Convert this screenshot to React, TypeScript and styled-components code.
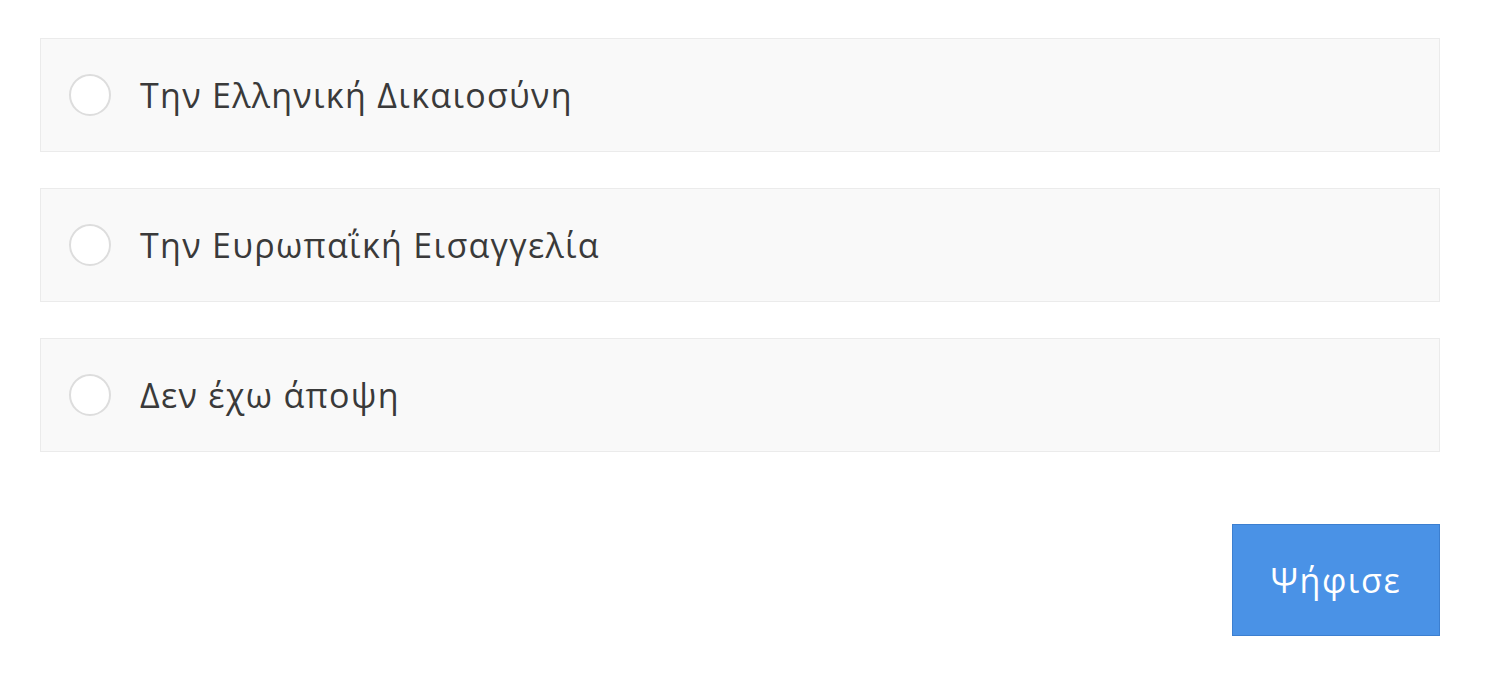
import React from "react";
import styled, { createGlobalStyle } from "styled-components";

const GlobalStyle = createGlobalStyle`
  body {
    margin: 0;
    background: #ffffff;
    font-family: "Open Sans", "Noto Sans", sans-serif;
  }
`;

const Poll = styled.form`
  display: flex;
  flex-direction: column;
  gap: 36px;
  width: 1400px;
  padding: 38px 0 0 40px;
`;

const Option = styled.label`
  display: flex;
  align-items: center;
  gap: 29px;
  padding: 0 28px;
  height: 114px;
  background: #f9f9f9;
  border: 1px solid #ebebeb;
  box-sizing: border-box;
  cursor: pointer;
`;

const Radio = styled.span`
  width: 42px;
  height: 42px;
  border-radius: 50%;
  border: 2px solid #dddddd;
  background: #ffffff;
  box-sizing: border-box;
  flex-shrink: 0;
`;

const OptionText = styled.span`
  font-size: 34px;
  color: #3a3a3a;
  letter-spacing: 1.3px;
`;

const Actions = styled.div`
  display: flex;
  justify-content: flex-end;
  margin-top: 36px;
`;

const VoteButton = styled.button`
  width: 208px;
  height: 112px;
  background: #4a92e6;
  border: 1px solid #3c7fd0;
  color: #ffffff;
  font-family: "Open Sans", "Noto Sans", sans-serif;
  font-size: 34px;
  letter-spacing: 1.6px;
`;

const options = [
  "Την Ελληνική Δικαιοσύνη",
  "Την Ευρωπαΐκή Εισαγγελία",
  "Δεν έχω άποψη",
];

export default function App() {
  return (
    <>
      <GlobalStyle />
      <Poll>
        {options.map((o) => (
          <Option key={o}>
            <Radio />
            <OptionText>{o}</OptionText>
          </Option>
        ))}
        <Actions>
          <VoteButton type="button">Ψήφισε</VoteButton>
        </Actions>
      </Poll>
    </>
  );
}
